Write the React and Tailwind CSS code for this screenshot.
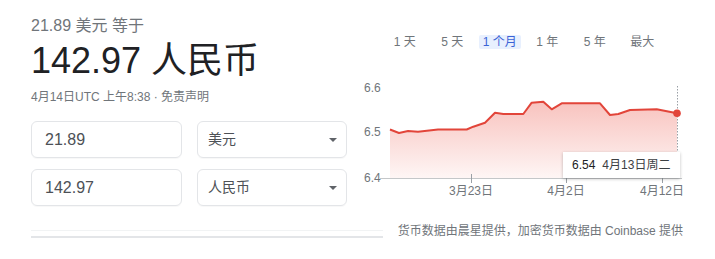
import React from "react";

const font = { fontFamily: '"Liberation Sans", Arial, "Noto Sans CJK SC", sans-serif' };

const tabs = ["1 天", "5 天", "1 个月", "1 年", "5 年", "最大"];

// chart points in page coordinates (svg viewBox matches the page)
const points = [
  [390, 129.5], [399, 133], [408, 131], [418, 131.7], [438, 129.5], [466.7, 129.5],
  [473.3, 126.7], [485, 122.7], [495, 112.7], [503.3, 114], [523.3, 114], [531.7, 102.7],
  [543.3, 101.7], [551.7, 109.3], [561.7, 103.3], [600, 103.3], [610, 115], [618.3, 114],
  [630, 110], [656.7, 109.3], [677, 113.3],
];

const linePath = points.map((p, i) => `${i ? "L" : "M"}${p[0]} ${p[1]}`).join(" ");
const areaPath = `${linePath} L677 178 L390 178 Z`;

const ConverterRow = ({ amount, currency }) => (
  <div className="flex gap-[15px]">
    <div className="w-[151px] h-[37px] border border-[#e3e5e8] rounded-[6px] flex items-center pl-[13px] text-[16px] text-[#4d5156] shadow-[0_1px_1px_rgba(0,0,0,0.03)]">
      {amount}
    </div>
    <div className="w-[150px] h-[37px] border border-[#e3e5e8] rounded-[6px] flex items-center justify-between pl-[10px] pr-[9px] text-[14px] text-[#4d5156] shadow-[0_1px_1px_rgba(0,0,0,0.03)]">
      <span>{currency}</span>
      <span className="w-0 h-0 border-l-[4px] border-r-[4px] border-t-[4px] border-l-transparent border-r-transparent border-t-[#5f6368]" />
    </div>
  </div>
);

const Chart = () => (
  <div className="relative w-[335px] h-[122px]">
    <svg width="335" height="122" viewBox="355 78 335 122" className="block">
      <defs>
        <linearGradient id="fill" x1="0" y1="0" x2="0" y2="1">
          <stop offset="0%" stopColor="#ea4335" stopOpacity="0.32" />
          <stop offset="100%" stopColor="#ea4335" stopOpacity="0.05" />
        </linearGradient>
      </defs>
      <text x="364" y="92" fontSize="12" fill="#70757a" style={font}>6.6</text>
      <text x="364" y="136" fontSize="12" fill="#70757a" style={font}>6.5</text>
      <text x="364" y="182" fontSize="12" fill="#70757a" style={font}>6.4</text>
      <path d={areaPath} fill="url(#fill)" />
      <line x1="380" y1="178.5" x2="682" y2="178.5" stroke="#c4c7c9" strokeWidth="1" />
      {[471, 566, 662].map((x) => (
        <line key={x} x1={x + 0.5} y1="174" x2={x + 0.5} y2="183" stroke="#9aa0a6" strokeWidth="1" />
      ))}
      <line x1="677.5" y1="86" x2="677.5" y2="178" stroke="#9aa0a6" strokeWidth="1" strokeDasharray="1.5 1.5" />
      <path d={linePath} fill="none" stroke="#e2453a" strokeWidth="2" strokeLinejoin="round" />
      <circle cx="677" cy="113.3" r="3.8" fill="#e2453a" />
      <text x="471" y="195" fontSize="12" fill="#70757a" textAnchor="middle" style={font}>3月23日</text>
      <text x="566" y="195" fontSize="12" fill="#70757a" textAnchor="middle" style={font}>4月2日</text>
      <text x="662" y="195" fontSize="12" fill="#70757a" textAnchor="middle" style={font}>4月12日</text>
    </svg>
    <div className="absolute left-[208px] top-[74px] w-[117px] h-[26px] bg-white shadow-[0_1px_3px_rgba(0,0,0,0.25)] flex items-center gap-[7px] pl-[9px] text-[12px]">
      <span className="text-[#202124]">6.54</span>
      <span className="text-[#3c4043]">4月13日周二</span>
    </div>
  </div>
);

export default function App() {
  return (
    <div className="flex w-[715px] h-[259px] bg-white overflow-hidden" style={font}>
      <div className="w-[355px] pl-[31px] pt-[16px] flex flex-col">
        <div className="text-[16px] leading-[20px] text-[#70757a]">21.89 美元 等于</div>
        <div className="mt-[3px] text-[36px] leading-[44px] text-[#202124]">142.97 人民币</div>
        <div className="mt-[6px] text-[12px] leading-[16px] text-[#70757a]">4月14日UTC 上午8:38 · 免责声明</div>
        <div className="mt-[16px] flex flex-col gap-[11px]">
          <ConverterRow amount="21.89" currency="美元" />
          <ConverterRow amount="142.97" currency="人民币" />
        </div>
        <div className="mt-[24px] w-[352px] border-t border-[#f1f3f4]" />
        <div className="mt-[5px] w-[352px] h-[2px] bg-[#e3e5e8]" />
      </div>
      <div className="flex-1 flex flex-col">
        <div className="mt-[35px] ml-[26px] grid grid-cols-6 w-[285px] text-[12px] leading-[14px]">
          {tabs.map((t, i) => (
            <div key={t} className="flex justify-center">
              <span
                className={
                  i === 2
                    ? "px-[4px] bg-[#e8f0fe] text-[#3b63d6] rounded-[2px]"
                    : "px-[4px] text-[#70757a]"
                }
              >
                {t}
              </span>
            </div>
          ))}
        </div>
        <div className="mt-[29px]">
          <Chart />
        </div>
        <div className="mt-[23px] pr-[32px] text-right text-[12px] leading-[16px] text-[#70757a]">
          货币数据由晨星提供，加密货币数据由 Coinbase 提供
        </div>
      </div>
    </div>
  );
}
